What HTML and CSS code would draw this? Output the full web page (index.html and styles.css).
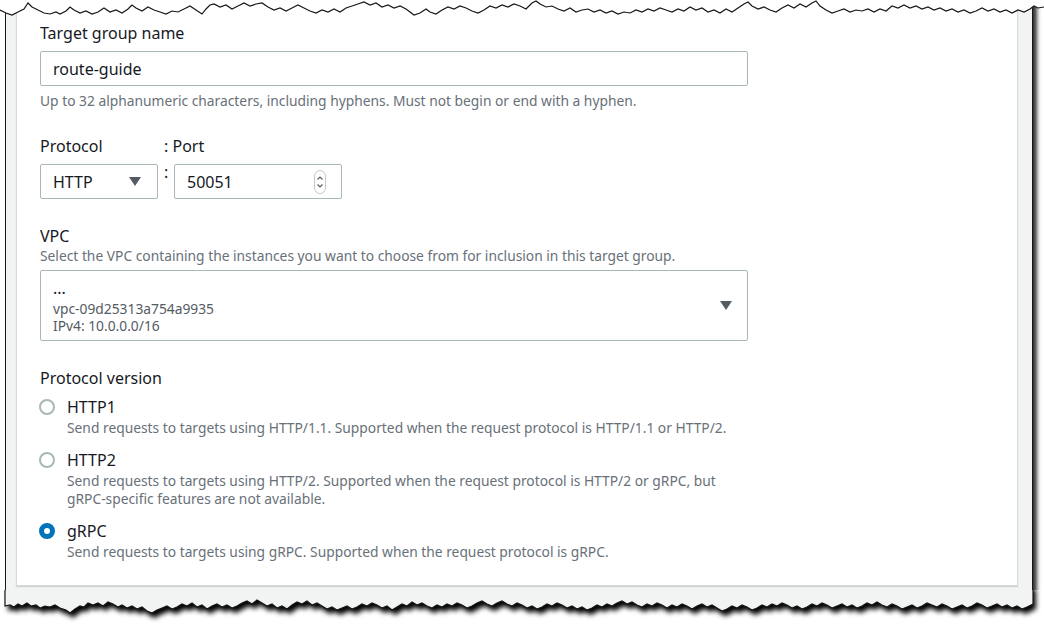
FILE: index.html
```html
<!DOCTYPE html>
<html lang="en">
<head>
    <meta charset="UTF-8">
    <meta name="viewport" content="width=device-width, initial-scale=1.0">
    <title>Target group</title>
    <link rel="stylesheet" href="styles.css">
</head>
<body>
<div class="page">
    <div class="sheet">
        <div class="card">
            <div class="field">
                <label class="field-label">Target group name</label>
                <div class="input wide">route-guide</div>
                <p class="hint">Up to 32 alphanumeric characters, including hyphens. Must not begin or end with a hyphen.</p>
            </div>

            <div class="field proto-row">
                <div class="proto-col">
                    <label class="field-label">Protocol</label>
                    <div class="input select proto">
                        <span>HTTP</span>
                        <svg class="caret" width="12" height="9" viewBox="0 0 12 9"><polygon points="0,0 12,0 6,9" fill="#545b64"/></svg>
                    </div>
                </div>
                <div class="port-col">
                    <label class="field-label">: Port</label>
                    <div class="port-row">
                        <span class="sep">:</span>
                        <div class="input port">
                            <span>50051</span>
                            <svg class="spinner" width="12" height="24" viewBox="0 0 12 24">
                                <rect x="0.5" y="0.5" width="11" height="23" rx="5.5" fill="none" stroke="#c3cbcd"/>
                                <polyline points="3.5,9.5 6,7 8.5,9.5" fill="none" stroke="#545b64" stroke-width="1.1"/>
                                <polyline points="3.5,14.5 6,17 8.5,14.5" fill="none" stroke="#545b64" stroke-width="1.1"/>
                            </svg>
                        </div>
                    </div>
                </div>
            </div>

            <div class="field gap-lg">
                <label class="field-label">VPC</label>
                <p class="desc">Select the VPC containing the instances you want to choose from for inclusion in this target group.</p>
                <div class="input vpc">
                    <div class="vpc-text">
                        <div class="vpc-name">...</div>
                        <div class="vpc-meta">vpc-09d25313a754a9935</div>
                        <div class="vpc-meta">IPv4: 10.0.0.0/16</div>
                    </div>
                    <svg class="caret" width="12" height="9" viewBox="0 0 12 9"><polygon points="0,0 12,0 6,9" fill="#545b64"/></svg>
                </div>
            </div>

            <div class="field gap-lg">
                <label class="field-label">Protocol version</label>
                <div class="options">
                    <div class="option">
                        <span class="radio"></span>
                        <div>
                            <div class="option-title">HTTP1</div>
                            <p class="option-desc">Send requests to targets using HTTP/1.1. Supported when the request protocol is HTTP/1.1 or HTTP/2.</p>
                        </div>
                    </div>
                    <div class="option">
                        <span class="radio"></span>
                        <div>
                            <div class="option-title">HTTP2</div>
                            <p class="option-desc">Send requests to targets using HTTP/2. Supported when the request protocol is HTTP/2 or gRPC, but<br>gRPC-specific features are not available.</p>
                        </div>
                    </div>
                    <div class="option">
                        <span class="radio checked"></span>
                        <div>
                            <div class="option-title">gRPC</div>
                            <p class="option-desc">Send requests to targets using gRPC. Supported when the request protocol is gRPC.</p>
                        </div>
                    </div>
                </div>
            </div>
        </div>
    </div>

    <!-- torn paper edges -->
    <svg class="tear-top" width="1044" height="24" viewBox="0 0 1044 24">
        <path fill="#fff" d="M0,-5 L0,10 L6,13 L12,15 L18,12 L24,9 L28,3 L32,7 L38,10 L44,13 L50,14 L56,12 L60,14 L66,11 L70,7 L74,10 L80,13 L86,11 L92,14 L98,12 L104,8 L110,12 L116,10 L122,13 L128,9 L132,5 L136,8 L142,11 L148,7 L154,10 L160,12 L166,14 L172,11 L178,12 L184,9 L190,6 L196,10 L202,14 L206,9 L210,5 L214,4 L220,7 L226,5 L232,9 L238,6 L244,3 L250,6 L256,4 L262,3 L268,7 L274,10 L280,8 L286,11 L292,8 L298,5 L304,8 L310,11 L316,13 L322,10 L328,12 L334,9 L340,12 L346,8 L352,6 L358,4 L364,2 L370,5 L376,3 L382,7 L388,5 L394,8 L400,6 L406,9 L410,12 L414,15 L420,13 L426,9 L430,12 L436,14 L442,10 L448,7 L454,9 L460,6 L466,8 L472,11 L478,13 L484,10 L490,6 L496,8 L502,5 L508,7 L514,4 L520,6 L526,9 L532,3 L536,1 L540,4 L546,7 L552,6 L558,9 L564,11 L570,8 L576,12 L582,10 L588,9 L594,12 L600,10 L606,13 L612,11 L618,14 L624,12 L630,13 L636,10 L642,12 L648,9 L654,11 L660,8 L666,10 L672,12 L678,9 L684,11 L690,7 L696,10 L702,8 L708,12 L714,10 L720,13 L726,9 L732,12 L738,8 L744,4 L748,2 L752,6 L758,9 L764,7 L770,10 L776,12 L782,8 L788,5 L794,8 L800,4 L806,7 L812,3 L816,1 L820,6 L826,10 L832,13 L838,11 L844,9 L850,12 L856,10 L862,11 L868,9 L874,12 L880,9 L886,11 L892,6 L898,8 L904,5 L910,8 L916,6 L922,9 L928,7 L934,10 L940,8 L946,11 L952,9 L958,12 L964,10 L970,13 L976,11 L982,8 L988,11 L994,9 L1000,12 L1006,10 L1012,13 L1018,10 L1024,12 L1030,9 L1034,6 L1038,8 L1044,7 L1044,-5 Z"/>
        <path fill="none" stroke="#161616" stroke-width="1.2" d="M0,10 L6,13 L12,15 L18,12 L24,9 L28,3 L32,7 L38,10 L44,13 L50,14 L56,12 L60,14 L66,11 L70,7 L74,10 L80,13 L86,11 L92,14 L98,12 L104,8 L110,12 L116,10 L122,13 L128,9 L132,5 L136,8 L142,11 L148,7 L154,10 L160,12 L166,14 L172,11 L178,12 L184,9 L190,6 L196,10 L202,14 L206,9 L210,5 L214,4 L220,7 L226,5 L232,9 L238,6 L244,3 L250,6 L256,4 L262,3 L268,7 L274,10 L280,8 L286,11 L292,8 L298,5 L304,8 L310,11 L316,13 L322,10 L328,12 L334,9 L340,12 L346,8 L352,6 L358,4 L364,2 L370,5 L376,3 L382,7 L388,5 L394,8 L400,6 L406,9 L410,12 L414,15 L420,13 L426,9 L430,12 L436,14 L442,10 L448,7 L454,9 L460,6 L466,8 L472,11 L478,13 L484,10 L490,6 L496,8 L502,5 L508,7 L514,4 L520,6 L526,9 L532,3 L536,1 L540,4 L546,7 L552,6 L558,9 L564,11 L570,8 L576,12 L582,10 L588,9 L594,12 L600,10 L606,13 L612,11 L618,14 L624,12 L630,13 L636,10 L642,12 L648,9 L654,11 L660,8 L666,10 L672,12 L678,9 L684,11 L690,7 L696,10 L702,8 L708,12 L714,10 L720,13 L726,9 L732,12 L738,8 L744,4 L748,2 L752,6 L758,9 L764,7 L770,10 L776,12 L782,8 L788,5 L794,8 L800,4 L806,7 L812,3 L816,1 L820,6 L826,10 L832,13 L838,11 L844,9 L850,12 L856,10 L862,11 L868,9 L874,12 L880,9 L886,11 L892,6 L898,8 L904,5 L910,8 L916,6 L922,9 L928,7 L934,10 L940,8 L946,11 L952,9 L958,12 L964,10 L970,13 L976,11 L982,8 L988,11 L994,9 L1000,12 L1006,10 L1012,13 L1018,10 L1024,12 L1030,9 L1034,6 L1038,8 L1044,7"/>
    </svg>

    <svg class="tear-bottom" width="1044" height="40" viewBox="0 0 1044 40">
        <defs>
            <filter id="soft" x="-5%" y="-50%" width="110%" height="200%">
                <feGaussianBlur stdDeviation="2.4"/>
            </filter>
            <path id="paper" d="M5,-6 L5,16 L10,15 L14,17 L18,14 L22,16 L27,13 L31,16 L36,15 L40,18 L45,16 L50,17 L55,15 L60,18 L66,20 L70,23 L75,19 L80,16 L84,17 L88,13 L93,15 L98,13 L103,16 L108,12 L113,14 L118,17 L122,15 L127,18 L132,16 L137,19 L142,17 L147,21 L152,23 L157,20 L162,18 L167,16 L172,19 L177,17 L182,14 L187,16 L192,13 L197,17 L202,15 L207,19 L212,16 L217,14 L222,17 L227,15 L232,18 L237,16 L242,13 L247,11 L252,14 L257,10 L262,13 L267,16 L272,14 L277,18 L282,16 L287,19 L292,15 L297,12 L302,14 L307,11 L312,15 L317,13 L322,16 L327,19 L332,17 L337,20 L342,18 L347,16 L352,19 L357,17 L362,14 L367,16 L372,13 L377,15 L382,18 L387,16 L392,20 L397,17 L402,14 L407,16 L412,12 L417,15 L422,13 L427,16 L432,18 L437,15 L442,17 L447,14 L452,16 L457,13 L462,15 L467,18 L472,16 L477,13 L482,11 L487,14 L492,16 L497,13 L502,11 L507,14 L512,16 L517,13 L522,15 L527,18 L532,16 L537,19 L542,17 L547,14 L552,16 L557,13 L562,15 L567,18 L572,16 L577,19 L582,17 L587,20 L592,18 L597,15 L602,17 L607,14 L612,16 L617,13 L622,11 L627,14 L632,12 L637,15 L642,17 L647,14 L652,16 L657,13 L662,15 L667,18 L672,15 L677,17 L682,14 L687,16 L692,19 L697,16 L702,14 L707,17 L712,15 L717,18 L722,21 L727,19 L732,16 L737,18 L742,15 L747,17 L752,20 L757,18 L762,15 L767,17 L772,14 L777,16 L782,13 L787,15 L792,18 L797,16 L802,19 L807,17 L812,14 L817,16 L822,13 L827,15 L832,18 L837,16 L842,14 L847,17 L852,15 L857,18 L862,16 L867,13 L872,15 L877,12 L882,15 L887,17 L892,14 L897,16 L902,19 L907,17 L912,15 L917,18 L922,16 L927,13 L932,15 L937,17 L942,14 L947,16 L952,19 L957,17 L962,15 L967,18 L972,16 L977,13 L982,15 L987,18 L992,16 L997,14 L1002,17 L1007,15 L1012,18 L1017,16 L1022,19 L1027,17 L1033,14 L1033,-6 Z"/>
        </defs>
        <rect width="1044" height="40" fill="#fff"/>
        <use href="#paper" fill="#000" transform="translate(3,5)" filter="url(#soft)"/>
        <use href="#paper" fill="#f2f3f3" stroke="#161616" stroke-width="1.2"/>
    </svg>
</div>
</body>
</html>
```

FILE: styles.css
```css
body {
    margin: 0;
    background-color: #fff;
    font-family: "Noto Sans", "Liberation Sans", sans-serif;
    color: #16191f;
}
.page {
    position: relative;
    width: 1044px;
    height: 630px;
    overflow: hidden;
}
.sheet {
    margin-left: 5px;
    width: 1028px;
    height: 630px;
    box-sizing: border-box;
    padding: 0 14px 0 10px;
    background-color: #f2f3f3;
    border-left: 1px solid #161616;
    border-right: 1px solid #161616;
    box-shadow: 4px 3px 4px rgba(0, 0, 0, 0.8);
}
.card {
    background-color: #fff;
    border: 1px solid #d5dbdb;
    border-top: none;
    box-shadow: 0 1px 1px rgba(0, 28, 36, 0.15);
    padding: 22px 23px 24px;
}
.field + .field {
    margin-top: 25px;
}
.field.gap-lg {
    margin-top: 26px;
}
.field-label {
    display: block;
    font-size: 16px;
    line-height: 22px;
}
.input {
    display: flex;
    align-items: center;
    justify-content: space-between;
    height: 35px;
    box-sizing: border-box;
    padding: 0 12px;
    border: 1px solid #aab7b8;
    border-radius: 2px;
    background-color: #fff;
    font-size: 16px;
    margin-top: 7px;
}
.input.wide {
    width: 708px;
}
.hint {
    margin: 6px 0 0;
    font-size: 13.8px;
    line-height: 18px;
    color: #687078;
}
.desc {
    margin: 0;
    font-size: 13.8px;
    line-height: 18px;
    color: #687078;
}

/* protocol : port */
.proto-row {
    display: flex;
    gap: 6px;
}
.proto {
    width: 118px;
    padding-right: 16px;
}
.port-row {
    display: flex;
    align-items: flex-start;
}
.sep {
    width: 10px;
    box-sizing: border-box;
    font-size: 16px;
    line-height: 22px;
    margin-top: 4px;
}
.port {
    width: 168px;
    padding-right: 15px;
}

/* vpc select */
.vpc {
    width: 708px;
    height: 71px;
    margin-top: 5px;
    padding: 0 15px 0 12px;
}
.vpc-text {
    align-self: flex-start;
    padding-top: 8px;
}
.vpc-name {
    font-size: 16px;
    line-height: 18px;
    margin-bottom: 3px;
}
.vpc-meta {
    font-size: 13.8px;
    line-height: 17px;
    color: #545b64;
}

/* radios */
.options {
    display: flex;
    flex-direction: column;
    gap: 12px;
    margin-top: 7px;
}
.option {
    display: flex;
    gap: 12px;
}
.radio {
    flex: none;
    width: 16px;
    height: 16px;
    margin-top: 3px;
    margin-left: -1px;
    box-sizing: border-box;
    border: 2px solid #aab7b8;
    border-radius: 50%;
    background-color: #fff;
}
.radio.checked {
    border: 5px solid #0073bb;
}
.option-title {
    font-size: 16px;
    line-height: 22px;
}
.option-desc {
    margin: 1px 0 0;
    font-size: 13.8px;
    line-height: 18px;
    color: #687078;
}

/* torn edges lie over the sheet */
.tear-top {
    position: absolute;
    left: 0;
    top: 0;
}
.tear-bottom {
    position: absolute;
    left: 0;
    top: 590px;
}
```
